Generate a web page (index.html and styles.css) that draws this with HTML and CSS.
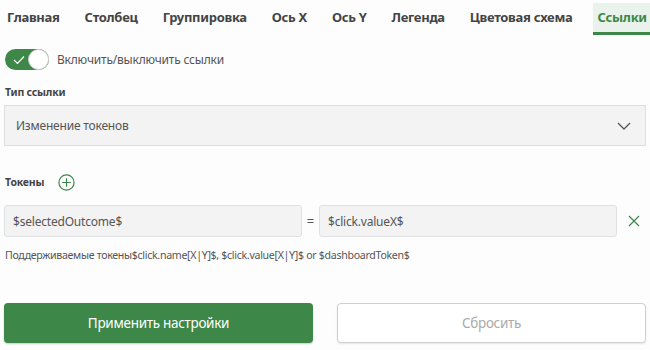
FILE: index.html
```html
<html lang="ru">
<head>
    <meta charset="UTF-8">
    <meta name="viewport" content="width=device-width, initial-scale=1.0">
    <title>Ссылки</title>
    <link rel="stylesheet" href="styles.css">
</head>
<body>
    <div class="tabs">
        <a class="tab">Главная</a>
        <a class="tab">Столбец</a>
        <a class="tab">Группировка</a>
        <a class="tab">Ось X</a>
        <a class="tab">Ось Y</a>
        <a class="tab">Легенда</a>
        <a class="tab">Цветовая схема</a>
        <a class="tab active">Ссылки</a>
    </div>

    <div class="content">
        <label class="switch-row">
            <span class="switch">
                <svg class="check" width="12" height="10" viewBox="0 0 12 10"><path d="M1 5 L4.5 8.5 L11 1.5" fill="none" stroke="#fff" stroke-width="1.2"/></svg>
                <span class="knob"></span>
            </span>
            <span class="switch-label">Включить/выключить ссылки</span>
        </label>

        <div class="field-label">Тип ссылки</div>
        <div class="select">
            <span>Изменение токенов</span>
            <svg width="14" height="8" viewBox="0 0 14 8"><path d="M1 1 L7 7 L13 1" fill="none" stroke="#555" stroke-width="1.3"/></svg>
        </div>

        <div class="tokens-head">
            <span class="field-label">Токены</span>
            <svg class="add" width="17" height="17" viewBox="0 0 17 17"><circle cx="8.5" cy="8.5" r="7.6" fill="none" stroke="#3d8748" stroke-width="1.2"/><path d="M8.5 4.2 V12.8 M4.2 8.5 H12.8" stroke="#3d8748" stroke-width="1.2"/></svg>
        </div>

        <div class="token-row">
            <input type="text" class="token-input" value="$selectedOutcome$">
            <span class="eq">=</span>
            <input type="text" class="token-input" value="$click.valueX$">
            <svg class="remove" width="12" height="12" viewBox="0 0 12 12"><path d="M1 1 L11 11 M11 1 L1 11" stroke="#3d8748" stroke-width="1.2"/></svg>
        </div>

        <p class="hint">Поддерживаемые токены$click.name[X|Y]$, $click.value[X|Y]$ or $dashboardToken$</p>

        <div class="buttons">
            <button class="btn apply">Применить настройки</button>
            <button class="btn reset">Сбросить</button>
        </div>
    </div>
</body>
</html>
```

FILE: styles.css
```css
* {
  box-sizing: border-box;
}

body {
  margin: 0;
  background-color: #fdfdfe;
  font-family: "Noto Sans", "Open Sans", sans-serif;
  color: #555;
  width: 650px;
  height: 350px;
  overflow: hidden;
}

.tabs {
  display: flex;
  gap: 25px;
  padding: 3px 0 0 7px;
  height: 36px;
}

.tab {
  flex-shrink: 0;
  white-space: nowrap;
  font-size: 13px;
  font-weight: bold;
  color: #444;
  padding: 5px 0 0 0;
  height: 32px;
  letter-spacing: -0.3px;
}

.tab.active {
  color: #3d8748;
  background-color: #e9f3eb;
  border-bottom: 3px solid #3d8748;
  margin-left: -4px;
  padding-left: 4px;
  padding-right: 3px;
}

.content {
  padding: 0 4px;
}

.switch-row {
  display: flex;
  align-items: center;
  margin-top: 13px;
  margin-left: 1px;
}

.switch {
  position: relative;
  width: 44px;
  height: 21px;
  border-radius: 11px;
  background-color: #3d8748;
  display: inline-block;
}

.switch .check {
  position: absolute;
  left: 8px;
  top: 6px;
}

.switch .knob {
  position: absolute;
  right: 0;
  top: 0;
  width: 21px;
  height: 21px;
  border-radius: 50%;
  background: #fff;
  border: 1px solid #cfcfcf;
}

.switch-label {
  font-size: 12px;
  margin-left: 8px;
  color: #555;
  letter-spacing: -0.2px;
}

.field-label {
  font-size: 10.5px;
  font-weight: bold;
  color: #444;
  letter-spacing: -0.2px;
}

.content > .field-label {
  margin-top: 15px;
  margin-left: 1px;
}

.select {
  margin-top: 6px;
  height: 41px;
  background-color: #f3f3f4;
  border: 1px solid #dcdfe0;
  display: flex;
  align-items: center;
  justify-content: space-between;
  padding: 0 14px 0 11px;
  font-size: 12px;
  color: #555;
  letter-spacing: -0.2px;
}

.tokens-head {
  display: flex;
  align-items: center;
  margin-top: 27px;
  margin-left: 1px;
  height: 18px;
}

.tokens-head .add {
  margin-left: 14px;
}

.token-row {
  display: flex;
  align-items: center;
  margin-top: 14px;
}

.token-input {
  width: 298px;
  height: 32px;
  border: 1px solid #dfe1e2;
  border-radius: 3px;
  background-color: #f3f3f4;
  font-family: "Noto Sans", "Open Sans", sans-serif;
  font-size: 12px;
  color: #555;
  padding: 0 8px;
  letter-spacing: -0.2px;
}

.eq {
  width: 17px;
  text-align: center;
  font-size: 13px;
  color: #555;
}

.remove {
  margin-left: 11px;
}

.hint {
  font-size: 10.6px;
  color: #555;
  margin: 11px 0 0 1px;
  letter-spacing: -0.3px;
}

.buttons {
  display: flex;
  justify-content: space-between;
  margin-top: 41px;
}

.btn {
  width: 309px;
  height: 40px;
  border-radius: 4px;
  font-family: "Noto Sans", "Open Sans", sans-serif;
  font-size: 13.5px;
  cursor: pointer;
  letter-spacing: -0.3px;
}

.apply {
  background-color: #3d8748;
  color: #fff;
  border: none;
  box-shadow: 0 1px 2px rgba(0,0,0,0.2);
}

.reset {
  background-color: #fff;
  color: #aaa;
  border: 1px solid #cfcfcf;
  box-shadow: 0 1px 2px rgba(0,0,0,0.1);
}
```
